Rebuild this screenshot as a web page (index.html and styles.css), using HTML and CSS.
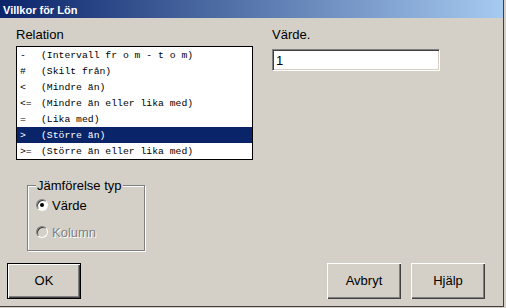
FILE: index.html
```html
<!DOCTYPE html>
<html lang="sv">
<head>
    <meta charset="UTF-8" />
    <title>Villkor för Lön</title>
    <link rel="stylesheet" href="styles.css">
</head>
<body>
    <div class="window">
        <div class="titlebar">Villkor för Lön</div>

        <div class="top">
            <div class="col-relation">
                <div class="label">Relation</div>
                <ul class="listbox">
                    <li><span class="op">-</span>(Intervall fr o m - t o m)</li>
                    <li><span class="op">#</span>(Skilt från)</li>
                    <li><span class="op">&lt;</span>(Mindre än)</li>
                    <li><span class="op">&lt;=</span>(Mindre än eller lika med)</li>
                    <li><span class="op">=</span>(Lika med)</li>
                    <li class="sel"><span class="op">&gt;</span>(Större än)</li>
                    <li><span class="op">&gt;=</span>(Större än eller lika med)</li>
                </ul>
            </div>
            <div class="col-value">
                <div class="label">Värde.</div>
                <div class="textbox">1</div>
            </div>
        </div>

        <fieldset class="group">
            <legend>Jämförelse typ</legend>
            <div class="radio-row">
                <span class="radio checked"></span>
                <span>Värde</span>
            </div>
            <div class="radio-row disabled">
                <span class="radio"></span>
                <span>Kolumn</span>
            </div>
        </fieldset>

        <div class="buttons">
            <div class="btn default">OK</div>
            <div class="btn-group">
                <div class="btn">Avbryt</div>
                <div class="btn">Hjälp</div>
            </div>
        </div>
    </div>
</body>
</html>
```

FILE: styles.css
```css
*{
    margin:0;
    padding:0;
    box-sizing: border-box;
}
body{
    background-color: #d4d0c8;
    font-family: "Liberation Sans", Arial, sans-serif;
    font-size: 13px;
    color: #000;
}
.window{
    width: 504px;
    height: 307px;
    border-right: 1px solid #404040;
    border-bottom: 1px solid #404040;
    display: flex;
    flex-direction: column;
}
.titlebar{
    height: 18px;
    padding: 3px 0 0 3px;
    line-height: 15px;
    font-size: 11px;
    font-weight: bold;
    color: #fff;
    background: linear-gradient(to right, #0a246a, #a6caf0);
}
.label{
    line-height: 15px;
}
.top{
    display: flex;
    padding-top: 9px;
}
.col-relation{
    margin-left: 16px;
    width: 237px;
}
.col-value{
    margin-left: 19px;
    width: 168px;
}
.listbox{
    list-style: none;
    margin-top: 4px;
    border: 1px solid #000;
    background-color: #fff;
    font-family: "Liberation Mono", "Courier New", monospace;
    font-size: 9.75px;
}
.listbox li{
    height: 16px;
    line-height: 17px;
    padding-left: 3px;
    white-space: pre;
    display: flex;
}
.listbox .op{
    width: 21px;
}
.listbox .sel{
    background-color: #0a246a;
    color: #fff;
}
.textbox{
    margin-top: 7px;
    height: 22px;
    padding: 3px 0 0 3px;
    line-height: 15px;
    background-color: #fff;
    border: 1px solid;
    border-color: #808080 #fff #fff #808080;
    box-shadow: inset 1px 1px 0 #404040, inset -1px -1px 0 #d4d0c8;
}
.group{
    margin: 18px 0 0 27px;
    width: 118px;
    padding: 0 8px 10px 8px;
    border: 1px solid #808080;
    box-shadow: inset 1px 1px 0 #fff, 1px 1px 0 #fff;
}
.group legend{
    padding: 0 1px;
    line-height: 15px;
    background-color: #d4d0c8;
}
.radio-row{
    display: flex;
    align-items: center;
    gap: 4px;
    height: 16px;
    margin-top: 4px;
}
.radio-row + .radio-row{
    margin-top: 11px;
}
.radio{
    width: 12px;
    height: 12px;
    border-radius: 50%;
    border: 1px solid;
    border-color: #808080 #fff #fff #808080;
    box-shadow: inset 1px 1px 0 #404040;
    background-color: #fff;
    display: flex;
    align-items: center;
    justify-content: center;
}
.radio.checked::after{
    content: "";
    width: 4px;
    height: 4px;
    border-radius: 50%;
    background-color: #000;
}
.disabled{
    color: #808080;
    text-shadow: 1px 1px 0 #fff;
}
.disabled .radio{
    background-color: #d4d0c8;
}
.buttons{
    display: flex;
    justify-content: space-between;
    margin-top: 12px;
    padding: 0 18px 0 7px;
}
.btn-group{
    display: flex;
    gap: 10px;
}
.btn{
    width: 74px;
    height: 36px;
    line-height: 36px;
    text-align: center;
    box-shadow: inset 1px 1px 0 #fff, inset -1px -1px 0 #404040, inset -2px -2px 0 #808080;
}
.btn.default{
    border: 1px solid #000;
    line-height: 34px;
}
```
